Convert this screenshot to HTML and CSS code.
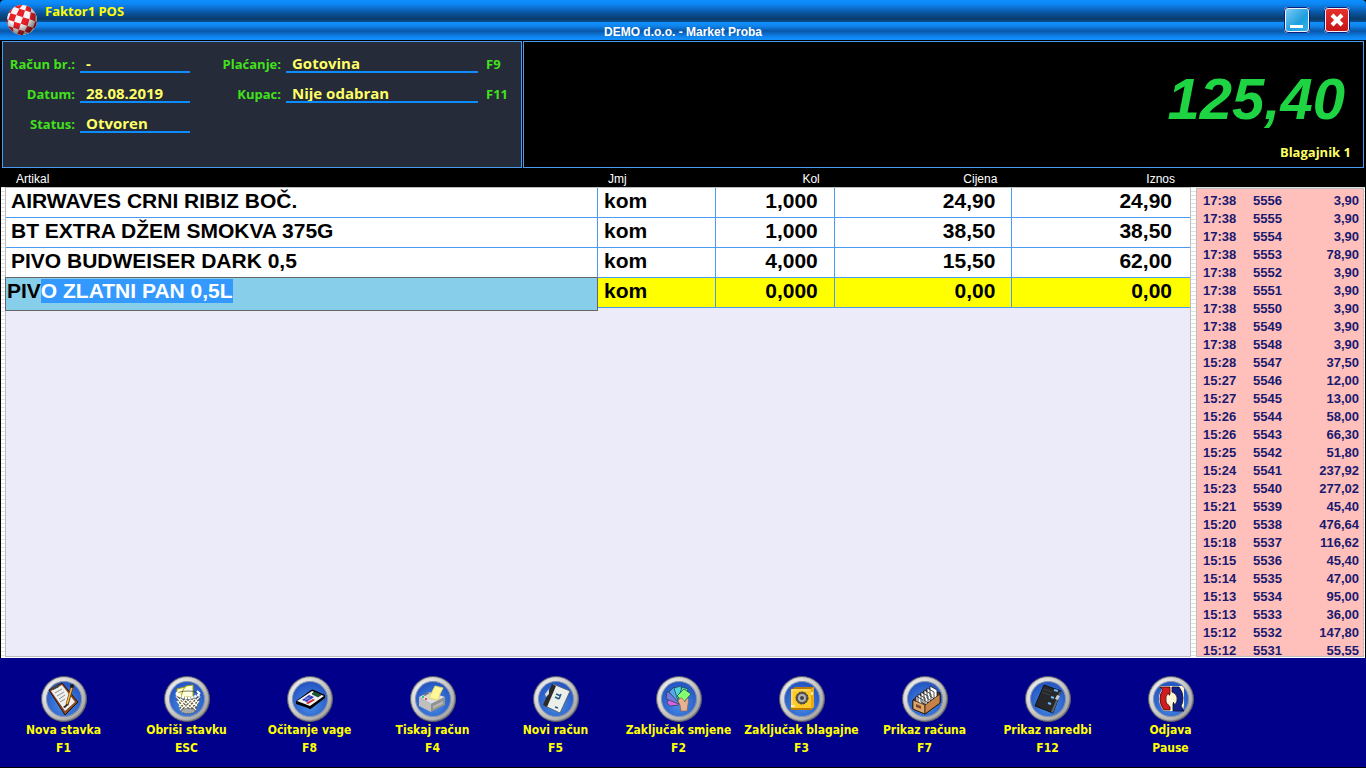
FILE: index.html
```html
<!DOCTYPE html>
<html lang="hr">
<head>
  <meta charset="UTF-8" />
  <meta name="viewport" content="width=device-width, initial-scale=1.0" />
  <title>Faktor1 POS</title>
  <link rel="stylesheet" href="styles.css">
</head>
<body>
  <header class="titlebar">
    <div class="brand">
      <svg class="ball" viewBox="0 0 30 30" aria-hidden="true">
        <defs>
          <radialGradient id="shade" cx="38%" cy="32%" r="68%">
            <stop offset="0.5" stop-color="#000" stop-opacity="0" />
            <stop offset="1" stop-color="#000" stop-opacity="0.55" />
          </radialGradient>
          <clipPath id="ball-clip"><circle cx="15" cy="15" r="15" /></clipPath>
        </defs>
        <g clip-path="url(#ball-clip)">
          <rect width="30" height="30" fill="#f6f6f6" />
          <g transform="rotate(18 15 15)" fill="#e8202a">
            <path d="M5 0h6L9 5H3zM15 0h5l1 5h-6zM24 0h6v5h-4z" />
            <path d="M-1 5h4L2 12h-3zM9 5h6v7H8zM21 5h5l2 7h-6z" />
            <path d="M2 12h6v7H2zM15 12h7v7h-7zM28 12h3v7h-3z" />
            <path d="M-1 19h3l1 6h-4zM8 19h7v6H9zM22 19h6l-2 6h-5z" />
            <path d="M3 25h6l2 6H5zM15 25h6l-1 6h-5zM26 25h5v6h-7z" />
          </g>
          <circle cx="15" cy="15" r="15" fill="url(#shade)" />
        </g>
      </svg>
      <span class="app-name">Faktor1 POS</span>
    </div>
    <h1 class="company">DEMO d.o.o. - Market Proba</h1>
    <div class="window-buttons">
      <button class="win-btn minimize" type="button" aria-label="Minimiziraj">
        <svg viewBox="0 0 22 22"><path d="M4 17.5h13" stroke="#fff" stroke-width="3" /></svg>
      </button>
      <button class="win-btn close" type="button" aria-label="Zatvori">
        <svg viewBox="0 0 22 22"><path d="M6 6l10 10M16 6L6 16" stroke="#fff" stroke-width="4" /></svg>
      </button>
    </div>
  </header>

  <section class="info">
    <div class="panel details">
      <label for="racun">Račun br.:</label><input id="racun" value="-" readonly>
      <label for="placanje">Plaćanje:</label><input id="placanje" value="Gotovina" readonly><span class="key">F9</span>
      <label for="datum">Datum:</label><input id="datum" value="28.08.2019" readonly>
      <label for="kupac">Kupac:</label><input id="kupac" value="Nije odabran" readonly><span class="key">F11</span>
      <label for="status">Status:</label><input id="status" value="Otvoren" readonly>
    </div>
    <div class="panel total">
      <output class="amount">125,40</output>
      <span class="cashier">Blagajnik 1</span>
    </div>
  </section>

  <main class="work">
    <div class="items">
      <table class="items-table">
        <thead>
          <tr><th>Artikal</th><th>Jmj</th><th class="num">Kol</th><th class="num">Cijena</th><th class="num">Iznos</th></tr>
        </thead>
        <tbody>
          <tr><td>AIRWAVES CRNI RIBIZ BOČ.</td><td>kom</td><td class="num">1,000</td><td class="num">24,90</td><td class="num">24,90</td></tr>
          <tr><td>BT EXTRA DŽEM SMOKVA 375G</td><td>kom</td><td class="num">1,000</td><td class="num">38,50</td><td class="num">38,50</td></tr>
          <tr><td>PIVO BUDWEISER DARK 0,5</td><td>kom</td><td class="num">4,000</td><td class="num">15,50</td><td class="num">62,00</td></tr>
          <tr class="current"><td class="edit-cell"><input id="artikal" aria-label="Artikal" value="PIVO ZLATNI PAN 0,5L" spellcheck="false" autocomplete="off"></td><td>kom</td><td class="num">0,000</td><td class="num">0,00</td><td class="num">0,00</td></tr>
        </tbody>
      </table>
    </div>
    <aside class="history">
      <table class="history-table">
        <tbody>
          <tr><td>17:38</td><td>5556</td><td class="num">3,90</td></tr>
          <tr><td>17:38</td><td>5555</td><td class="num">3,90</td></tr>
          <tr><td>17:38</td><td>5554</td><td class="num">3,90</td></tr>
          <tr><td>17:38</td><td>5553</td><td class="num">78,90</td></tr>
          <tr><td>17:38</td><td>5552</td><td class="num">3,90</td></tr>
          <tr><td>17:38</td><td>5551</td><td class="num">3,90</td></tr>
          <tr><td>17:38</td><td>5550</td><td class="num">3,90</td></tr>
          <tr><td>17:38</td><td>5549</td><td class="num">3,90</td></tr>
          <tr><td>17:38</td><td>5548</td><td class="num">3,90</td></tr>
          <tr><td>15:28</td><td>5547</td><td class="num">37,50</td></tr>
          <tr><td>15:27</td><td>5546</td><td class="num">12,00</td></tr>
          <tr><td>15:27</td><td>5545</td><td class="num">13,00</td></tr>
          <tr><td>15:26</td><td>5544</td><td class="num">58,00</td></tr>
          <tr><td>15:26</td><td>5543</td><td class="num">66,30</td></tr>
          <tr><td>15:25</td><td>5542</td><td class="num">51,80</td></tr>
          <tr><td>15:24</td><td>5541</td><td class="num">237,92</td></tr>
          <tr><td>15:23</td><td>5540</td><td class="num">277,02</td></tr>
          <tr><td>15:21</td><td>5539</td><td class="num">45,40</td></tr>
          <tr><td>15:20</td><td>5538</td><td class="num">476,64</td></tr>
          <tr><td>15:18</td><td>5537</td><td class="num">116,62</td></tr>
          <tr><td>15:15</td><td>5536</td><td class="num">45,40</td></tr>
          <tr><td>15:14</td><td>5535</td><td class="num">47,00</td></tr>
          <tr><td>15:13</td><td>5534</td><td class="num">95,00</td></tr>
          <tr><td>15:13</td><td>5533</td><td class="num">36,00</td></tr>
          <tr><td>15:12</td><td>5532</td><td class="num">147,80</td></tr>
          <tr><td>15:12</td><td>5531</td><td class="num">55,55</td></tr>
        </tbody>
      </table>
    </aside>
  </main>

  <!-- shared round frame for the toolbar icons -->
  <svg class="defs" width="0" height="0" aria-hidden="true">
    <defs>
      <linearGradient id="rim" x1="0" y1="0" x2="1" y2="1">
        <stop offset="0" stop-color="#909090" />
        <stop offset="0.2" stop-color="#d2d2d2" />
        <stop offset="0.55" stop-color="#b4b4b4" />
        <stop offset="1" stop-color="#666" />
      </linearGradient>
      <linearGradient id="rim-light" x1="0" y1="0" x2="1" y2="1">
        <stop offset="0" stop-color="#f2f2f2" />
        <stop offset="0.5" stop-color="#c8c8c8" />
        <stop offset="1" stop-color="#a0a0a0" />
      </linearGradient>
      <radialGradient id="face" cx="50%" cy="65%" r="60%">
        <stop offset="0" stop-color="#4a90ea" />
        <stop offset="1" stop-color="#2456c4" />
      </radialGradient>
      <symbol id="frame" viewBox="0 0 46 46">
        <circle cx="23" cy="23" r="22.5" fill="url(#rim)" stroke="#5c5f66" />
        <circle cx="23" cy="23" r="19.5" fill="none" stroke="url(#rim-light)" stroke-width="3" />
        <circle cx="23" cy="23" r="17.5" fill="url(#face)" stroke="#8494b4" />
      </symbol>
    </defs>
  </svg>

  <nav class="toolbar">
    <button class="tool" type="button">
      <svg viewBox="0 0 46 46"><use href="#frame" />
        <path d="M8 14L21 7l16 19-13 13z" fill="#8a4522" stroke="#2b1206" />
        <path d="M10 15l11-6 13 17-10 9z" fill="#eef0ee" />
        <path d="M14 17l7-4M16 20l7-4M18 23l6-4M19 26l5-3" stroke="#8b9096" />
        <path d="M10 12l7-4 1 3-6 3z" fill="#444" />
        <path d="M31 11l-5 18" stroke="#6b410e" stroke-width="3" />
        <path d="M31 11l-5 17" stroke="#f1b64c" stroke-width="1.5" />
        <circle cx="31" cy="10" r="2" fill="#221a14" />
        <path d="M22 31l4-3 1 1-3 3z" fill="#222" />
      </svg>
      <span>Nova stavka</span><span>F1</span>
    </button>
    <button class="tool" type="button">
      <svg viewBox="0 0 46 46"><use href="#frame" />
        <path d="M13 13l8-2 3 1v9H13z" fill="#ffffcf" stroke="#a6a000" />
        <path d="M19 14l3-4 7-1v12H17z" fill="#ffffdc" stroke="#a6a000" />
        <path d="M12 20q12 7 24 0l-4 15q-8 5-15 0z" fill="#555" />
        <path d="M12 20l14 17M16 22l14 14M21 23l11 11M26 23l7 7M30 22l4 5M13 25l9 12M36 20L22 37M32 21L18 36M27 23L16 34M22 23l-7 8M17 22l-3 5M35 25l-9 12" stroke="#fffbe4" stroke-width="1.2" />
        <ellipse cx="24" cy="19" rx="12" ry="4" fill="none" stroke="#222" stroke-width="0.6" />
        <path d="M12 18q12 8 24 0" fill="none" stroke="#fff" stroke-width="2.5" stroke-dasharray="2.5 0.7" />
        <path d="M12 18l2-2M36 18l-3-3" stroke="#fff" stroke-width="2" />
        <ellipse cx="24" cy="35" rx="7" ry="2.5" fill="#a9a9a9" stroke="#555" stroke-dasharray="1 1" />
      </svg>
      <span>Obriši stavku</span><span>ESC</span>
    </button>
    <button class="tool" type="button">
      <svg viewBox="0 0 46 46"><use href="#frame" />
        <path d="M9 25L24 14q1-1 3 0l11 5v3L25 32q-2 2-4 0L9 28z" fill="#000" />
        <path d="M10 25l15-10 12 5-14 10z" fill="#f1f1f1" />
        <path d="M25 18l2-2 7 3-3 2z" fill="#0b6130" stroke="#000" stroke-width="0.5" />
        <path d="M15 24l7-5 5 2-7 5z" fill="#2432c4" />
        <path d="M19 27l7-4 2 1-7 4z" fill="#cf1d2c" />
        <path d="M17 25l7-5M17 22l6 3M19 21l6 3" stroke="#eee" stroke-width="0.4" />
      </svg>
      <span>Očitanje vage</span><span>F8</span>
    </button>
    <button class="tool" type="button">
      <svg viewBox="0 0 46 46"><use href="#frame" />
        <path d="M9 21l10-5 16 5-14 7z" fill="#dcdcdc" />
        <path d="M9 21l12 7v8L9 30z" fill="#bfc0bd" />
        <path d="M21 28l14-7v8l-14 7z" fill="#92938f" />
        <path d="M23 30l10-5v3l-10 5z" fill="#b5b6b2" />
        <path d="M13 19l5-3 2 1-5 3z" fill="#777" />
        <path d="M19 22l3-6 3-6 8 2-3 6-2 6z" fill="#fff79a" stroke="#e4d969" />
        <circle cx="13" cy="21" r="1" fill="#00b83c" /><circle cx="16" cy="23" r="1" fill="#e02222" />
      </svg>
      <span>Tiskaj račun</span><span>F4</span>
    </button>
    <button class="tool" type="button">
      <svg viewBox="0 0 46 46"><use href="#frame" />
        <path d="M20 8l17 7-10 22-17-8z" fill="#eceee9" stroke="#4c5562" stroke-width="0.8" />
        <path d="M19 8l4 2-9 21-4-2z" fill="#2a2a2a" />
        <path d="M12 18l4-5v5l-3 3z" fill="#d7d9db" />
        <path d="M23 18l5 2M22 21l4 2M28 18l-2 5M22 31l3 1" stroke="#235a86" stroke-width="1.5" />
      </svg>
      <span>Novi račun</span><span>F5</span>
    </button>
    <button class="tool" type="button">
      <svg viewBox="0 0 46 46"><use href="#frame" />
        <g stroke="#203850" stroke-width="0.7">
          <path d="M23 29l-9 1-3-3 2-5 10 2z" fill="#d765e0" />
          <path d="M23 28l-13-5 1-8 13 9z" fill="#7379df" />
          <path d="M23 27l-10-11 5-5 8 13z" fill="#54a8e5" />
          <path d="M22 25l-4-13 7-2 2 14z" fill="#4fd6d6" />
          <path d="M22 23l4-12 6 2-4 13z" fill="#58dfa0" />
          <path d="M21 20l7-7 7 5-7 8z" fill="#84ff70" />
        </g>
        <path d="M22 25q2-4 4-3l3 4 2-4q2 0 1 6l-1 7h-6l-1-6z" fill="#e7b493" stroke="#8d5843" stroke-width="0.6" />
      </svg>
      <span>Zaključak smjene</span><span>F2</span>
    </button>
    <button class="tool" type="button">
      <svg viewBox="0 0 46 46"><use href="#frame" />
        <path d="M12 14l4-3h19v20l-3 3H12z" fill="#bd7a00" />
        <path d="M12 13h20v19H12z" fill="#ffc928" />
        <path d="M13 30V14h18" fill="none" stroke="#ffe688" />
        <path d="M32 13l3-2v20l-3 2z" fill="#eda914" />
        <path d="M12 29h4v2h-4zM32 16h2v3h-2z" fill="#fff0a5" />
        <circle cx="23" cy="22" r="6" fill="#555" stroke="#2d2d2d" stroke-dasharray="2 1" />
        <circle cx="23" cy="22" r="4" fill="#b4b4b4" /><circle cx="23" cy="22" r="2" fill="#444" />
      </svg>
      <span>Zaključak blagajne</span><span>F3</span>
    </button>
    <button class="tool" type="button">
      <svg viewBox="0 0 46 46"><use href="#frame" />
        <path d="M11 24l13-10 14 3v10L23 38l-12-5z" fill="#6c3d1e" stroke="#1b0f07" />
        <g fill="#fff" stroke="#222" stroke-width="0.8">
          <path d="M28 10l7 4v11l-7-5zM25 12l7 4v11l-7-5zM22 14l7 4v11l-7-5zM19 16l7 4v10l-7-4zM16 18l7 4v9l-7-4zM14 20l7 4v7l-7-3z" />
        </g>
        <path d="M11 24l12 5v9l-12-5z" fill="#dea66d" stroke="#1b0f07" stroke-width="0.7" />
        <path d="M23 29l15-11v9L23 38z" fill="#c68248" stroke="#1b0f07" stroke-width="0.7" />
        <path d="M14 28l5 2v3l-5-2z" fill="#7c4722" />
      </svg>
      <span>Prikaz računa</span><span>F7</span>
    </button>
    <button class="tool" type="button">
      <svg viewBox="0 0 46 46"><use href="#frame" />
        <path d="M19 9l17 6-8 22-18-7z" fill="#26282b" stroke="#111" />
        <path d="M35 15l1 1-8 21-2-1z" fill="#60656c" />
        <path d="M18 13l9 3M17 16l8 3" stroke="#3d4146" />
        <path d="M29 14l4 1M26 21l3 1M23 27l3 1" stroke="#76b7f3" stroke-width="2" />
        <path d="M32 19l3 1-2 4-3-1z" fill="#c5c8ca" />
      </svg>
      <span>Prikaz naredbi</span><span>F12</span>
    </button>
    <button class="tool" type="button">
      <svg viewBox="0 0 46 46"><use href="#frame" />
        <path d="M12 10h22l2 2v17l-1 6H16q-5-6-5-12 0-6 3-9z" fill="#fff4ca" />
        <path d="M12 11h10v9l-2-3q-3 3-2 9l4 5v3h-6q-4-5-4-11 0-6 3-9z" fill="#d41b20" stroke="#3b0508" stroke-width="0.8" />
        <path d="M24 11h7q4 5 4 11 0 5-2 8l3 5H25v-9l2 3q3-4 2-8-1-4-5-5z" fill="#14208c" stroke="#050b3b" stroke-width="0.8" />
        <path d="M19 22l4-4v7l5-4-5 9v-6l-4 4z" fill="#fffbe6" />
      </svg>
      <span>Odjava</span><span>Pause</span>
    </button>
  </nav>
  <script>
    // keep the part after the typed letters selected
    const artikal = document.getElementById('artikal');
    artikal.focus();
    artikal.setSelectionRange(3, artikal.value.length);
  </script>
</body>
</html>
```

FILE: styles.css
```css
* { box-sizing: border-box; }
body {
  margin: 0;
  height: 100vh;
  display: flex;
  flex-direction: column;
  overflow: hidden;
  background: #000;
  font-family: "Liberation Sans", Arial, sans-serif;
}
button { border: none; background: none; padding: 0; cursor: pointer; }
.num { text-align: right; }
.defs { position: absolute; }

/* title bar */
.titlebar {
  display: grid;
  grid-template-columns: 1fr auto 1fr;
  height: 40px;
  border-radius: 4px 4px 0 0;
  background: linear-gradient(#0d8fff 0, #0d86f4 4px, #0a58a8 12px, #083b69 19px, #0a4f94 22px, #1191ff 22px, #0f84ec 26px, #0956a8 31px, #0f86f2 37px, #1191ff 40px);
}
.brand { display: flex; gap: 8px; padding-left: 7px; }
.ball { width: 30px; height: 30px; margin-top: 5px; }
.app-name {
  margin-top: 2px;
  color: #ffff00;
  font: bold 13px/18px "Open Sans", "Noto Sans", sans-serif;
}
.company {
  align-self: end;
  margin: 0;
  color: #fff;
  font-size: 12px;
  line-height: 16px;
}
.window-buttons {
  display: flex;
  justify-content: flex-end;
  align-items: center;
  gap: 14px;
  padding-right: 16px;
}
.win-btn {
  width: 26px;
  height: 26px;
  border: 2px solid #eef2f4;
  border-radius: 4px;
  outline: 1px solid #0a1f80;
  outline-offset: -1px;
}
.win-btn svg { display: block; width: 22px; height: 22px; }
.minimize { background: linear-gradient(135deg, #7cc8f2, #1d9fdf 60%, #36b2e8); }
.close { background: linear-gradient(#e8302c, #c41616); }

/* receipt details and total */
.info {
  display: grid;
  grid-template-columns: 520px 1fr;
  gap: 1px;
  padding: 1px 2px 0;
}
.panel { border: 1px solid #4a9cf0; }
.details {
  display: grid;
  grid-template-columns: 72px 110px 86px 192px 1fr;
  grid-auto-rows: 30px;
  column-gap: 5px;
  height: 127px;
  padding-top: 1px;
  background: #252b38;
}
.details label, .key {
  align-self: end;
  text-align: right;
  color: #43e01c;
  font: bold 13px/18px "Open Sans", "Noto Sans", sans-serif;
}
.key { padding-left: 3px; text-align: left; }
.details input {
  align-self: end;
  width: 100%;
  height: 24px;
  padding: 5px 6px 0;
  border: none;
  border-bottom: 2px solid #0c8cff;
  background: none;
  color: #ffff66;
  font: bold 15px/17px "Open Sans", "Noto Sans", sans-serif;
  outline: none;
}
.details label[for="racun"], .details label[for="datum"], .details label[for="status"] { grid-column: 1; }
.total {
  display: flex;
  flex-direction: column;
  justify-content: flex-end;
  align-items: flex-end;
  padding: 0 12px 6px;
  background: #000;
}
.amount {
  padding-right: 6px;
  color: #1fd442;
  font-size: 58px;
  font-weight: bold;
  font-style: italic;
  line-height: 64px;
}
.cashier {
  margin-top: 12px;
  color: #ffff66;
  font: bold 13px/18px "Open Sans", "Noto Sans", sans-serif;
}

/* receipt items */
.work {
  flex: 1;
  min-height: 0;
  display: grid;
  grid-template-columns: 1fr 168px;
  grid-template-rows: 100%;
  gap: 5px;
  margin: 0 1px;
  padding: 0 1px 1px 4px;
  background: linear-gradient(#000 19px, transparent 19px), repeating-linear-gradient(#fff 0, #fff 3px, #dfe2e2 3px, #dfe2e2 4px);
}
.items {
  border: solid #bdbdbd;
  border-width: 0 1px 1px;
  border-image: linear-gradient(#000 20px, #bdbdbd 20px) 1;
  background: #ecebf9;
}
.items-table {
  width: 100%;
  table-layout: fixed;
  border-collapse: separate;
  border-spacing: 0;
}
.items-table th {
  height: 20px;
  padding: 2px 10px 0;
  border-bottom: 1px solid #bdbdbd;
  background: #000;
  color: #fff;
  font-size: 12px;
  font-weight: normal;
  line-height: 16px;
  text-align: left;
}
.items-table th:nth-child(1) { width: 50%; }
.items-table th:nth-child(2), .items-table th:nth-child(3) { width: 10%; }
.items-table th.num { padding-right: 15px; text-align: right; }
.items-table td {
  height: 30px;
  padding: 0 6px 4px;
  border-right: 1px solid #4a9cf0;
  border-bottom: 1px solid #4a9cf0;
  background: #fff;
  color: #000;
  font-size: 21px;
  font-weight: bold;
  line-height: 25px;
  white-space: nowrap;
}
.items-table td:first-child { padding-left: 5px; }
.items-table td.num { padding-right: 16px; }
.items-table td:last-child { padding-right: 18px; border-right: none; }
.items-table .current td { background: #ffff00; }
.items-table .edit-cell { position: relative; }
.edit-cell input {
  position: absolute;
  top: -1px;
  left: -1px;
  width: calc(100% + 2px);
  height: 34px;
  padding: 0 1px 6px;
  border: 1px solid #666;
  background: #87ceeb;
  color: #000;
  font: bold 21px/24px "Liberation Sans", Arial, sans-serif;
  outline: none;
}
.edit-cell input::selection { background: #3399ff; color: #fff; }

/* previous receipts */
.history {
  overflow: hidden;
  margin-top: 20px;
  padding-top: 3px;
  border: 1px solid #bdbdbd;
  background: #ffc0bb;
}
.history-table { width: 100%; border-collapse: collapse; }
.history-table td {
  height: 18px;
  padding: 0 4px 0 6px;
  color: #191970;
  font-size: 13px;
  font-weight: bold;
  line-height: 18px;
}
.history-table td:first-child { width: 50px; }

/* function keys */
.toolbar {
  display: grid;
  grid-template-columns: repeat(10, 1fr);
  margin-bottom: 1px;
  padding: 18px 134px 10px 2px;
  background: #00008b;
}
.tool {
  display: flex;
  flex-direction: column;
  align-items: center;
  color: #ffff00;
  font: bold 12px/18px "DejaVu Sans Condensed", "Noto Sans", sans-serif;
  white-space: nowrap;
}
.tool svg { width: 46px; height: 46px; margin-bottom: -1px; }
```
